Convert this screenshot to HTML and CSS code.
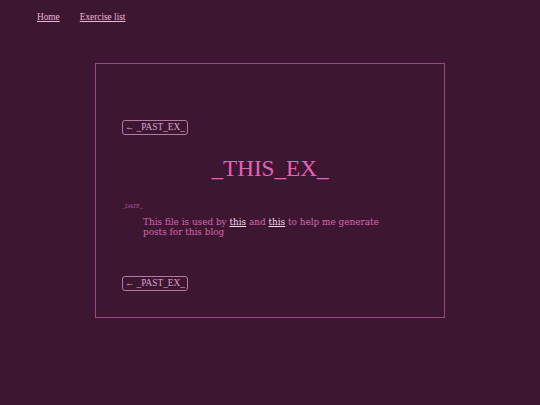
FILE: index.html
```html
<!DOCTYPE html>
<html lang="en">
<head>
    <meta charset="UTF-8">
    <meta name="viewport" content="width=device-width, initial-scale=1.0">
    <title>_THIS_EX_</title>
    <link rel="stylesheet" href="styles.css">
</head>
<body>
    <nav class="nav">
        <a href="/">Home</a>
        <a href="/exercises">Exercise list</a>
    </nav>
    <main class="post">
        <a href="#" class="pager">&larr; _PAST_EX_</a>
        <h1 class="title">_THIS_EX_</h1>
        <div class="date">_DATE_</div>
        <p class="body">
            This file is used by <a href="#">this</a> and <a href="#">this</a> to help me generate posts for this blog
        </p>
        <a href="#" class="pager">&larr; _PAST_EX_</a>
    </main>
</body>
</html>
```

FILE: styles.css
```css
body {
    margin: 0;
    background-color: #3d1632;
    font-family: "Liberation Serif", serif;
    color: #d668ae;
}
.nav {
    display: flex;
    gap: 20px;
    padding: 12px 0 0 37px;
    height: 39px;
    box-sizing: border-box;
    font-size: 9.3px;
}
.nav a {
    color: #e8b8d8;
}
.post {
    box-sizing: border-box;
    width: 350px;
    height: 255px;
    margin: 24px 0 0 95px;
    border: 1px solid #9a4884;
    padding: 56px 26px 0;
    display: flex;
    flex-direction: column;
    align-items: flex-start;
}
.pager {
    box-sizing: border-box;
    height: 15px;
    padding: 0 2px;
    border: 1px solid #b47aa2;
    border-radius: 3px;
    color: #dca2ca;
    text-decoration: none;
    font-size: 9.3px;
    line-height: 13px;
}
.title {
    align-self: stretch;
    margin: 19px 0 0;
    text-align: center;
    font-weight: normal;
    font-size: 23.2px;
    line-height: 28px;
    color: #e563b5;
}
.date {
    margin-top: 21px;
    font-size: 6px;
    font-style: italic;
    color: #b9559c;
}
.body {
    margin: 8px 21px 0;
    font-family: "DejaVu Serif", serif;
    font-size: 8.9px;
    line-height: 10px;
}
.body a {
    color: #f2d8ea;
}
.body + .pager {
    margin-top: 39px;
}
```
